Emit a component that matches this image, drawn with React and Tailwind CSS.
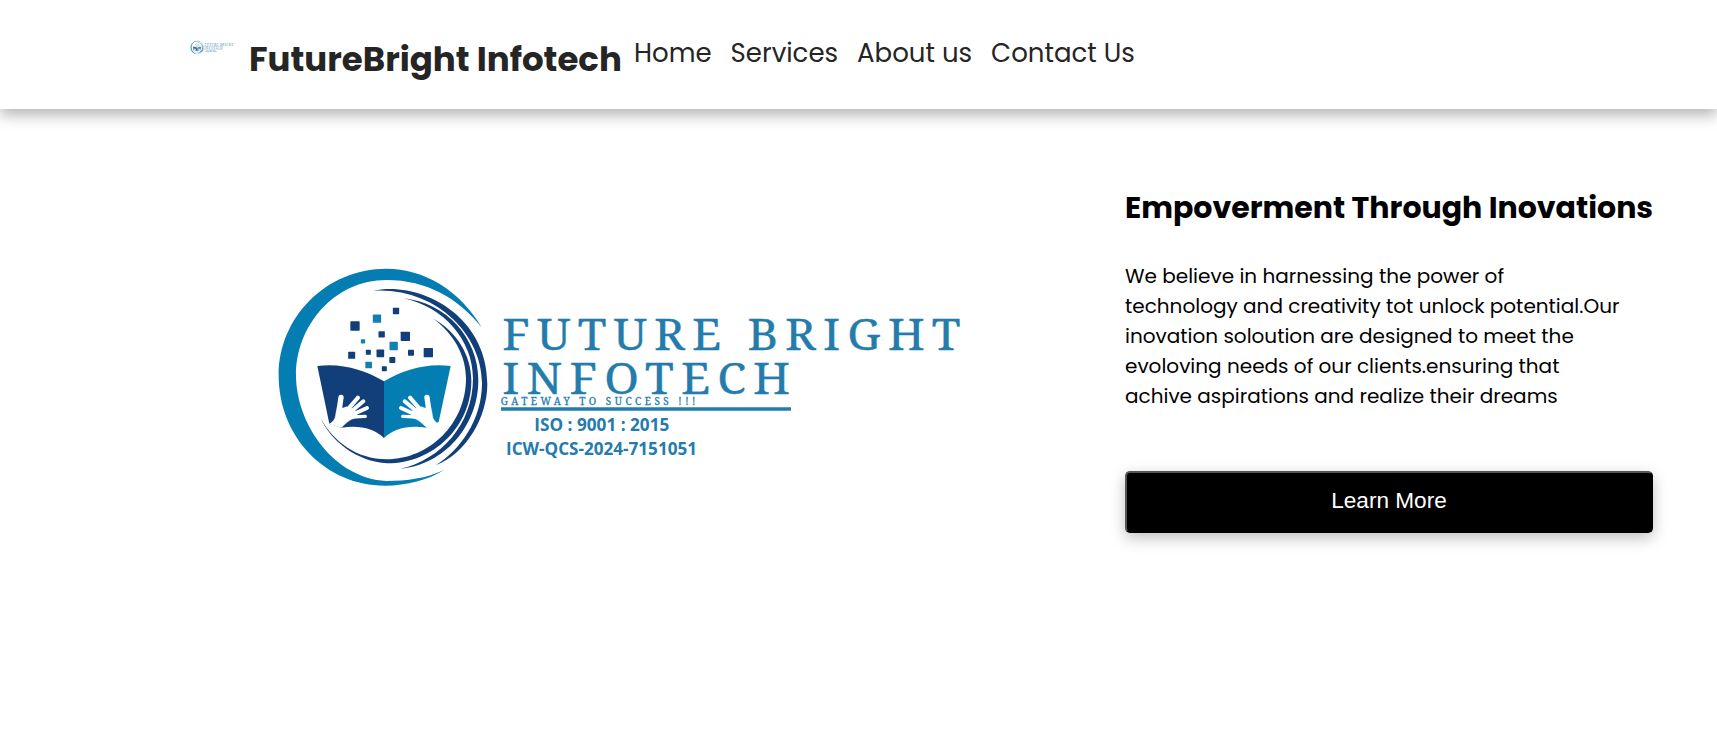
import React from 'react';

const SQUARES = [
  [255, 198, 28, 0], [321, 176, 25, 1], [378, 153, 19, 0], [335, 223, 19, 0],
  [406, 229, 28, 0], [279, 244, 13, 1], [371, 258, 25, 1], [245, 286, 21, 0],
  [295, 277, 15, 0], [331, 280, 23, 0], [423, 278, 18, 0], [475, 278, 28, 0],
  [367, 300, 18, 0], [296, 315, 20, 1], [343, 326, 15, 0],
];

function Hand() {
  return (
    <g fill="#fff" stroke="#fff" strokeLinecap="round" strokeLinejoin="round">
      <path d="M206 462L213 412" strokeWidth="16" />
      <path d="M225 458L264 413" strokeWidth="12" />
      <path d="M232 464L280 424" strokeWidth="12" />
      <path d="M238 468L291 444" strokeWidth="12" />
      <path d="M238 471L286 469" strokeWidth="10" />
      <path d="M203 440L219 444L229 440L254 448L264 472C245 476 235 482 214 503L178 492C190 484 196 478 197 462Z" strokeWidth="1" />
    </g>
  );
}

function Logo({ className }) {
  return (
    <svg viewBox="0 0 2100 705" className={className} role="img" aria-label="Future Bright Infotech">
      <path fill="#047db3" d="M635 202C570 90 460 26 350 26C165 26 26 175 26 345C26 535 170 677 345 677C410 677 475 660 522 630C470 655 410 663 350 663C190 655 78 490 78 345C78 200 190 60 350 60C470 60 565 115 635 202Z" />
      <g fill="#123f7a">
        <path d="M310 92C450 62 652 165 652 372C652 470 590 580 497 616C570 570 636 480 636 368C636 225 500 82 310 92Z" />
        <path d="M400 115C530 128 625 235 625 360C625 500 520 615 393 626C510 600 609 495 609 355C609 240 520 140 400 115Z" />
        <path d="M490 176C560 215 604 285 604 362C604 500 490 610 352 610C260 606 180 540 152 475C190 545 260 598 350 598C480 598 588 490 588 355C588 285 550 220 490 176Z" />
      </g>
      {SQUARES.map(([x, y, s, light]) => (
        <rect key={`${x}-${y}`} x={x - s / 2} y={y - s / 2} width={s} height={s} rx="2" fill={light ? '#1280b2' : '#123f7a'} />
      ))}
      <path fill="#123f7a" d="M142 318C210 308 285 328 342 364V534C310 505 270 495 214 503L178 491Z" />
      <path fill="#047db3" d="M542 318C474 308 399 328 342 364V534C374 505 414 495 470 503L506 486Z" />
      <Hand />
      <g transform="translate(684 0) scale(-1 1)"><Hand /></g>
      <g fill="#247cab" stroke="#247cab" className="font-['Noto_Serif','Liberation_Serif',serif]">
        <text x="697" y="271" fontSize="132" strokeWidth="1" letterSpacing="20" lengthAdjust="spacingAndGlyphs" textLength="1396">FUTURE BRIGHT</text>
        <text x="697" y="402" fontSize="132" strokeWidth="1" letterSpacing="20" lengthAdjust="spacingAndGlyphs" textLength="885">INFOTECH</text>
        <text x="692" y="434" fontSize="30" strokeWidth="0.8" textLength="584">GATEWAY TO SUCCESS !!!</text>
      </g>
      <path fill="#247cab" d="M693 442H1563V452H693Z" />
      <g fill="#247cab" fontWeight="700" className="font-['Open_Sans',sans-serif]">
        <text x="793" y="512" fontSize="51" textLength="405" lengthAdjust="spacingAndGlyphs">ISO : 9001 : 2015</text>
        <text x="708" y="585" fontSize="51" textLength="573" lengthAdjust="spacingAndGlyphs">ICW-QCS-2024-7151051</text>
      </g>
    </svg>
  );
}

export default function App() {
  return (
    <div className="min-h-screen bg-white font-['Poppins','Inter',sans-serif]">
      <header className="flex h-[109px] items-start bg-white pt-[35px] pl-[190px] text-[#252525] shadow-[0_6px_14px_rgba(0,0,0,0.3)]">
        <Logo className="mt-[5px] h-[15px] w-[44px] opacity-80" />
        <h1 className="ml-[15px] w-[385px] text-[34px] leading-[48px] font-bold whitespace-nowrap">FutureBright Infotech</h1>
        <nav className="flex gap-[19px] text-[26px] leading-[37px] whitespace-nowrap">
          <a>Home</a><a>Services</a><a>About us</a><a>Contact Us</a>
        </nav>
      </header>
      <main className="flex items-start pl-[270px]">
        <Logo className="mt-[151px] h-[235px] w-[700px] shrink-0" />
        <section className="ml-[155px] w-[528px] shrink-0 pt-[79px] text-black">
          <h2 className="text-[30px] leading-[40px] font-bold whitespace-nowrap">Empoverment Through Inovations</h2>
          <p className="mt-[33px] text-[20px] leading-[30px] whitespace-nowrap">
            We believe in harnessing the power of<br />
            technology and creativity tot unlock potential.Our<br />
            inovation soloution are designed to meet the<br />
            evoloving needs of our clients.ensuring that<br />
            achive aspirations and realize their dreams
          </p>
          <button className="mt-[60px] h-[62px] w-full rounded-[5px] border-2 border-t-[#555] border-r-black border-b-black border-l-[#555] bg-black pb-[2px] font-['Liberation_Sans',Arial,sans-serif] text-[22.6px] text-white shadow-[0_5px_15px_rgba(0,0,0,0.25)]">Learn More</button>
        </section>
      </main>
    </div>
  );
}
